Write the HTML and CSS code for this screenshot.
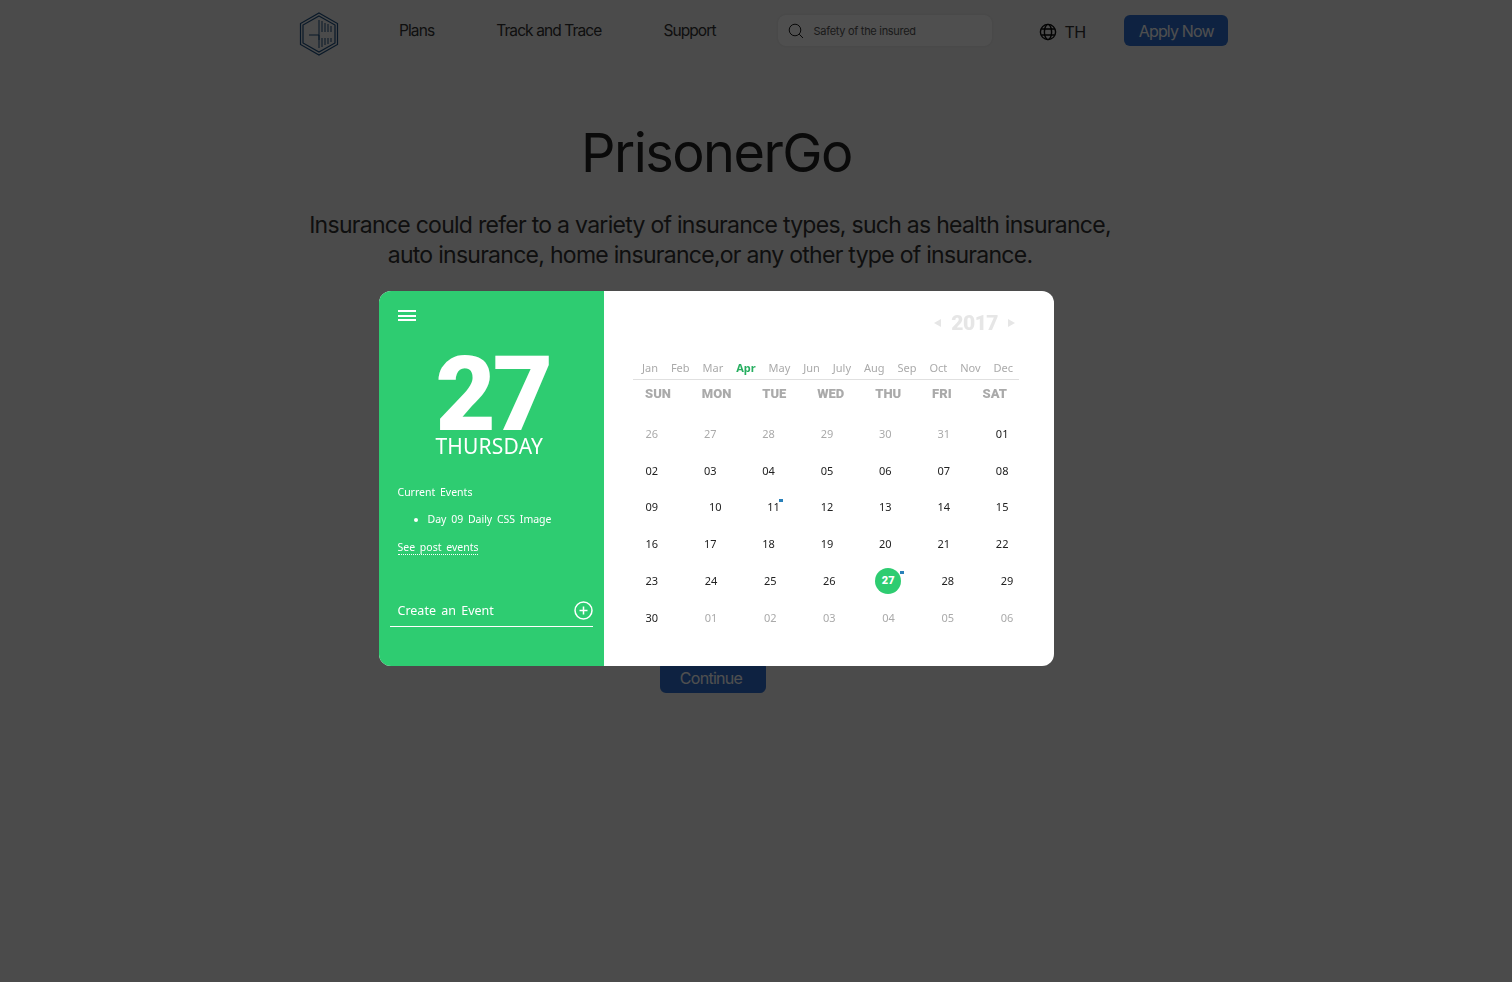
FILE: index.html

```html
<!DOCTYPE html>
<html lang="en">
  <head>
    <meta charset="UTF-8" />
    <meta name="viewport" content="width=device-width, initial-scale=1.0" />
    <title>PrisonerGo</title>
    <link rel="stylesheet" href="styles.css">
  </head>
  <body>
    <header class="navbar">
      <svg class="logo" width="40" height="44" viewBox="0 0 40 44" fill="none" stroke="#1d4f80">
        <path d="M20 1 L38.5 11.5 V32.5 L20 43 L1.5 32.5 V11.5 Z" stroke-width="1.2" />
        <path d="M20 4 L36 13 V31 L20 40 L4 31 V13 Z" stroke-width="1.2" />
        <path d="M20 8 V36 M23 9 V20 M26 11 V20 M29 12 V20 M32 14 V20 M23 26 V35 M26 26 V33 M29 26 V32 M32 26 V30 M10 23 H20 M20 23 V28" stroke-width="1" />
      </svg>
      <nav class="nav-links">
        <a class="nav-link">Plans</a>
        <a class="nav-link">Track and Trace</a>
        <a class="nav-link">Support</a>
      </nav>
      <div class="search">
        <svg width="16" height="16" viewBox="0 0 16 16" fill="none" stroke="#1c1c1c" stroke-width="1">
          <circle cx="7" cy="7" r="5.8" />
          <path d="M11.2 11.2 L15 15" />
        </svg>
        <span class="search-text">Safety of the insured</span>
      </div>
      <div class="lang">
        <svg width="18" height="18" viewBox="0 0 18 18" fill="none" stroke="#0a0a0a" stroke-width="1.4">
          <circle cx="9" cy="9" r="7.6" />
          <ellipse cx="9" cy="9" rx="3.6" ry="7.6" />
          <path d="M2.2 6 H15.8 M2.2 12 H15.8" />
        </svg>
        <span>TH</span>
      </div>
      <button class="apply-btn">Apply Now</button>
    </header>

    <main class="hero">
      <h1 class="hero-title">PrisonerGo</h1>
      <p class="hero-text">
        Insurance could refer to a variety of insurance types, such as health insurance,
        auto insurance, home insurance,or any other type of insurance.
      </p>
      <div class="calendar-space"></div>
      <button class="continue-btn">Continue</button>
    </main>

    <!-- Dark layer with the calendar on top -->
    <div class="overlay"></div>
    <div class="calendar">
      <div class="cal-left">
        <div class="menu-icon"><span></span><span></span><span></span></div>
        <div class="big-day">27</div>
        <div class="big-weekday">THURSDAY</div>
        <div class="events-title">Current Events</div>
        <ul class="events-list">
          <li>Day 09 Daily CSS Image</li>
        </ul>
        <a class="see-post">See post events</a>
        <div class="create-event">
          <span>Create an Event</span>
          <svg width="19" height="19" viewBox="0 0 19 19" fill="none" stroke="#fff">
            <circle cx="9.5" cy="9.5" r="8.5" stroke-width="1.5" />
            <path d="M9.5 5.5 V13.5 M5.5 9.5 H13.5" stroke-width="1.5" />
          </svg>
        </div>
      </div>
      <div class="cal-right">
        <div class="year-row">
          <span class="arrow-left"></span>
          <span class="year">2017</span>
          <span class="arrow-right"></span>
        </div>
        <div class="months">
          <span>Jan</span><span>Feb</span><span>Mar</span><span class="month-active">Apr</span>
          <span>May</span><span>Jun</span><span>July</span><span>Aug</span>
          <span>Sep</span><span>Oct</span><span>Nov</span><span>Dec</span>
        </div>
        <div class="weekdays">
          <span>SUN</span><span>MON</span><span>TUE</span><span>WED</span><span>THU</span><span>FRI</span><span>SAT</span>
        </div>
        <div class="week">
          <span class="muted">26</span><span class="muted">27</span><span class="muted">28</span><span class="muted">29</span><span class="muted">30</span><span class="muted">31</span><span>01</span>
        </div>
        <div class="week">
          <span>02</span><span>03</span><span>04</span><span>05</span><span>06</span><span>07</span><span>08</span>
        </div>
        <div class="week">
          <span>09</span><span class="shift">10</span><span class="shift has-event">11</span><span>12</span><span>13</span><span>14</span><span>15</span>
        </div>
        <div class="week">
          <span>16</span><span>17</span><span>18</span><span>19</span><span>20</span><span>21</span><span>22</span>
        </div>
        <div class="week week-wide">
          <span>23</span><span>24</span><span>25</span><span>26</span><span class="today">27</span><span>28</span><span>29</span>
        </div>
        <div class="week week-wide">
          <span>30</span><span class="muted">01</span><span class="muted">02</span><span class="muted">03</span><span class="muted">04</span><span class="muted">05</span><span class="muted">06</span>
        </div>
      </div>
    </div>
  </body>
</html>
```

FILE: styles.css

```css
body {
  font-family: Inter, sans-serif;
  background-color: #f0f0f0;
  margin: 0;
  height: 982px;
  overflow: hidden;
}

.navbar {
  display: flex;
  align-items: center;
  height: 61px;
  padding-left: 299px;
}

.logo {
  margin-top: 7px;
}

.nav-links {
  display: flex;
  margin-left: 60px;
  gap: 62px;
}

.nav-link {
  font-size: 15.5px;
  letter-spacing: -0.9px;
  color: #333;
}

.search {
  display: flex;
  align-items: center;
  gap: 10px;
  width: 214px;
  height: 31px;
  margin-left: 62px;
  padding-left: 10px;
  box-sizing: border-box;
  background-color: #fff;
  border-radius: 8px;
  box-shadow: 0 0 2px rgba(0, 0, 0, 0.1);
}

.search-text {
  font-size: 11px;
  letter-spacing: -0.3px;
  color: #555;
}

.lang {
  display: flex;
  align-items: center;
  gap: 8px;
  margin-left: 47px;
  margin-top: 3px;
  font-size: 16px;
  letter-spacing: -0.8px;
  color: #333;
}

.apply-btn {
  width: 104px;
  height: 31px;
  margin-left: 39px;
  border: none;
  border-radius: 6px;
  background-color: #2d6fd0;
  color: #fff;
  font-family: Inter, sans-serif;
  font-size: 16px;
  letter-spacing: -0.85px;
}

.hero {
  width: 1512px;
  box-sizing: border-box;
  text-align: center;
}

.hero-title {
  margin: 59px 0 0;
  padding-right: 79px;
  font-size: 54px;
  line-height: 66px;
  font-weight: 400;
  letter-spacing: -1.5px;
  color: #222;
}

.hero-text {
  width: 830px;
  margin: 24px 0 0 295px;
  font-size: 23px;
  line-height: 30px;
  letter-spacing: -0.72px;
  color: #333;
}

.calendar-space {
  height: 391px;
}

.continue-btn {
  width: 106px;
  height: 32px;
  margin-left: -86px;
  border: none;
  border-radius: 6px;
  background-color: #2d6fd0;
  color: #fff;
  font-family: Inter, sans-serif;
  font-size: 16px;
  letter-spacing: -0.7px;
  padding: 1px 4px 0 0;
}

.overlay {
  position: fixed;
  left: 0;
  top: 0;
  width: 100%;
  height: 100%;
  background-color: rgba(0, 0, 0, 0.69);
}

.calendar {
  position: fixed;
  left: 379px;
  top: 291px;
  display: flex;
  width: 675px;
  height: 375px;
  background-color: #fff;
  border-radius: 12px;
  overflow: hidden;
  font-family: "Noto Sans", sans-serif;
}

.cal-left {
  position: relative;
  width: 225px;
  box-sizing: border-box;
  padding: 19px 11px 0 18.5px;
  background-color: #2ecc71;
  color: #fff;
}

.menu-icon {
  display: flex;
  flex-direction: column;
  gap: 2.5px;
  width: 18px;
}

.menu-icon span {
  height: 2px;
  background-color: #fff;
}

.big-day {
  margin-top: 36px;
  padding-right: 5px;
  text-align: center;
  font-family: Roboto, sans-serif;
  font-weight: 900;
  font-size: 104px;
  line-height: 76px;
  letter-spacing: -3px;
}

.big-weekday {
  margin-top: 0;
  padding-right: 12px;
  text-align: center;
  font-size: 21px;
  letter-spacing: 0.2px;
  line-height: 26px;
}

.events-title {
  margin-top: 26px;
  font-size: 10.5px;
  line-height: 14px;
  word-spacing: 2px;
}

.events-list {
  margin: 13px 0 0;
  padding-left: 30px;
  font-size: 10.5px;
  line-height: 14px;
  word-spacing: 2px;
}

.see-post {
  display: inline-block;
  margin-top: 15px;
  font-size: 10.5px;
  line-height: 13px;
  word-spacing: 2px;
  border-bottom: 1px dotted #fff;
}

.create-event {
  display: flex;
  justify-content: space-between;
  align-items: center;
  width: 203px;
  box-sizing: border-box;
  height: 33px;
  margin: 38px 0 0 -8px;
  padding: 0 0 0 8px;
  border-bottom: 1px solid #fff;
  font-size: 12.5px;
  word-spacing: 2px;
}

.cal-right {
  width: 450px;
  box-sizing: border-box;
  padding: 0 35px 0 29px;
}

.year-row {
  display: flex;
  align-items: center;
  justify-content: flex-end;
  gap: 10px;
  height: 32px;
  margin-top: 16px;
  padding-right: 4px;
}

.year {
  font-family: Roboto, sans-serif;
  font-weight: 900;
  font-size: 21px;
  letter-spacing: -0.5px;
  color: #e6e6e6;
}

.arrow-left,
.arrow-right {
  width: 0;
  height: 0;
  border-top: 4px solid transparent;
  border-bottom: 4px solid transparent;
}

.arrow-left {
  border-right: 7px solid #e6e6e6;
}

.arrow-right {
  border-left: 7px solid #e6e6e6;
}

.months {
  display: flex;
  justify-content: space-between;
  margin-top: 17px;
  padding: 0 6px 0 9px;
  border-bottom: 1px solid #e0e0e0;
  font-size: 11px;
  line-height: 23px;
  color: #aaa;
}

.month-active {
  color: #27ae60;
  font-weight: 700;
}

.weekdays {
  display: flex;
  justify-content: space-between;
  padding: 0 12px;
  margin-top: 5px;
  font-family: Roboto, sans-serif;
  font-size: 13px;
  line-height: 17px;
  font-weight: 900;
  color: #aaa;
}

.week {
  display: grid;
  grid-template-columns: repeat(7, 58.4px);
  padding-left: 12.5px;
  height: 36.8px;
  align-items: center;
  font-size: 11px;
  color: #222;
}

.week-wide {
  grid-template-columns: repeat(7, 59.2px);
}

.weekdays + .week {
  margin-top: 13px;
}

.muted {
  color: #aaa;
}

.shift {
  padding-left: 5px;
}

.has-event,
.today {
  position: relative;
}

.has-event::after {
  content: "";
  position: absolute;
  left: 17px;
  top: 0;
  width: 4px;
  height: 3px;
  background-color: #2980b9;
}

.today {
  display: flex;
  align-items: center;
  justify-content: center;
  width: 26px;
  height: 26px;
  margin-left: -7px;
  border-radius: 50%;
  background-color: #2ecc71;
  color: #fff;
  font-family: Roboto, sans-serif;
  font-weight: 900;
}

.today::after {
  content: "";
  position: absolute;
  right: -3px;
  top: 3px;
  width: 4px;
  height: 3px;
  background-color: #2980b9;
}
```
